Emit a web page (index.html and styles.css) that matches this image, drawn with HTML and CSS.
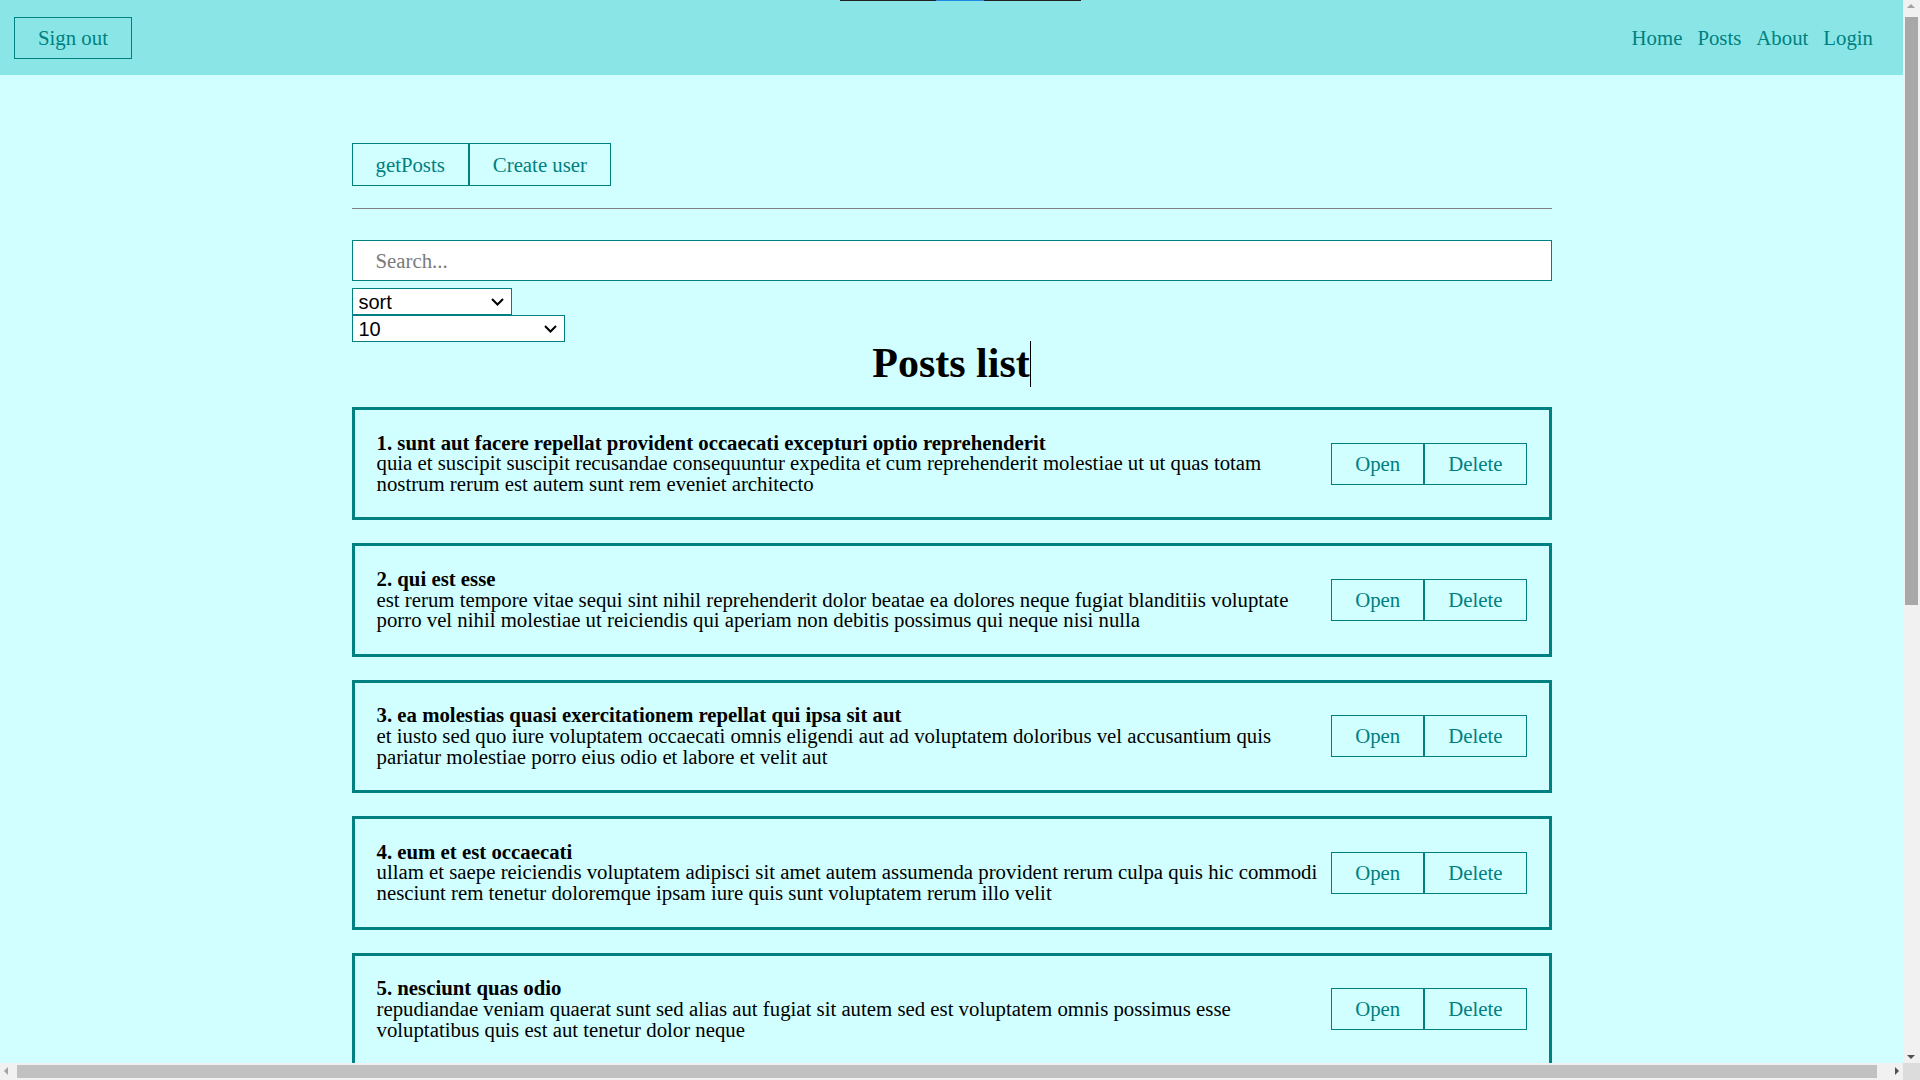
FILE: index.html
```html
<!DOCTYPE html>
<html lang="en">
<head>
<meta charset="utf-8">
<title>Posts</title>
<link rel="stylesheet" href="styles.css">
</head>
<body>
<div class="loader"><span class="loader-seg"></span></div>
<div class="page">
<header class="navbar">
  <button class="btn">Sign out</button>
  <nav class="nav-links">
    <a href="#">Home</a>
    <a href="#">Posts</a>
    <a href="#">About</a>
    <a href="#">Login</a>
  </nav>
</header>
<main class="app">
  <div class="actions">
    <button class="btn">getPosts</button>
    <button class="btn">Create user</button>
  </div>
  <hr class="divider">
  <input class="search" type="text" placeholder="Search...">
  <div class="select-wrap select-sort">
    <select class="select"><option>sort</option></select>
    <svg class="chevron" width="13" height="8" viewBox="0 0 13 8"><path d="M1 1 L6.5 6.5 L12 1" fill="none" stroke="#000" stroke-width="2"/></svg>
  </div>
  <div class="select-wrap select-limit">
    <select class="select"><option>10</option></select>
    <svg class="chevron" width="13" height="8" viewBox="0 0 13 8"><path d="M1 1 L6.5 6.5 L12 1" fill="none" stroke="#000" stroke-width="2"/></svg>
  </div>
  <h1 class="page-title">Posts list<span class="caret"></span></h1>
  <div class="posts">
    <div class="post">
      <div class="post-content">
        <strong>1. sunt aut facere repellat provident occaecati excepturi optio reprehenderit</strong>
        <div>quia et suscipit suscipit recusandae consequuntur expedita et cum reprehenderit molestiae ut ut quas totam nostrum rerum est autem sunt rem eveniet architecto</div>
      </div>
      <div class="post-btns"><button class="btn">Open</button><button class="btn">Delete</button></div>
    </div>
    <div class="post">
      <div class="post-content">
        <strong>2. qui est esse</strong>
        <div>est rerum tempore vitae sequi sint nihil reprehenderit dolor beatae ea dolores neque fugiat blanditiis voluptate porro vel nihil molestiae ut reiciendis qui aperiam non debitis possimus qui neque nisi nulla</div>
      </div>
      <div class="post-btns"><button class="btn">Open</button><button class="btn">Delete</button></div>
    </div>
    <div class="post">
      <div class="post-content">
        <strong>3. ea molestias quasi exercitationem repellat qui ipsa sit aut</strong>
        <div>et iusto sed quo iure voluptatem occaecati omnis eligendi aut ad voluptatem doloribus vel accusantium quis pariatur molestiae porro eius odio et labore et velit aut</div>
      </div>
      <div class="post-btns"><button class="btn">Open</button><button class="btn">Delete</button></div>
    </div>
    <div class="post">
      <div class="post-content">
        <strong>4. eum et est occaecati</strong>
        <div>ullam et saepe reiciendis voluptatem adipisci sit amet autem assumenda provident rerum culpa quis hic commodi nesciunt rem tenetur doloremque ipsam iure quis sunt voluptatem rerum illo velit</div>
      </div>
      <div class="post-btns"><button class="btn">Open</button><button class="btn">Delete</button></div>
    </div>
    <div class="post">
      <div class="post-content">
        <strong>5. nesciunt quas odio</strong>
        <div>repudiandae veniam quaerat sunt sed alias aut fugiat sit autem sed est voluptatem omnis possimus esse voluptatibus quis est aut tenetur dolor neque</div>
      </div>
      <div class="post-btns"><button class="btn">Open</button><button class="btn">Delete</button></div>
    </div>
    <div class="post">
      <div class="post-content">
        <strong>6. dolorem eum magni eos aperiam quia</strong>
        <div>ut aspernatur corporis harum nihil quis provident sequi mollitia nobis aliquid molestiae perspiciatis et ea nemo ab reprehenderit accusantium quas voluptate dolores velit et doloremque molestiae</div>
      </div>
      <div class="post-btns"><button class="btn">Open</button><button class="btn">Delete</button></div>
    </div>
    <div class="post">
      <div class="post-content">
        <strong>7. magnam facilis autem</strong>
        <div>dolore placeat quibusdam ea quo vitae magni quis enim qui quis quo nemo aut saepe quidem repellat excepturi ut quia sunt ut sequi eos ea sed quas</div>
      </div>
      <div class="post-btns"><button class="btn">Open</button><button class="btn">Delete</button></div>
    </div>
    <div class="post">
      <div class="post-content">
        <strong>8. dolorem dolore est ipsam</strong>
        <div>dignissimos aperiam dolorem qui eum facilis quibusdam animi sint suscipit qui sint possimus cum quaerat magni maiores excepturi ipsam ut commodi dolor voluptatum modi aut vitae</div>
      </div>
      <div class="post-btns"><button class="btn">Open</button><button class="btn">Delete</button></div>
    </div>
    <div class="post">
      <div class="post-content">
        <strong>9. nesciunt iure omnis dolorem tempora et accusantium</strong>
        <div>consectetur animi nesciunt iure dolore enim quia ad veniam autem ut quam aut nobis et est aut quod aut provident voluptas autem voluptas</div>
      </div>
      <div class="post-btns"><button class="btn">Open</button><button class="btn">Delete</button></div>
    </div>
    <div class="post">
      <div class="post-content">
        <strong>10. optio molestias id quia eum</strong>
        <div>quo et expedita modi cum officia vel magni doloribus qui repudiandae vero nisi sit quos veniam quod sed accusamus veritatis error</div>
      </div>
      <div class="post-btns"><button class="btn">Open</button><button class="btn">Delete</button></div>
    </div>
  </div>
</main>
</div>
<div class="vscroll">
  <span class="arrow arrow-up"></span>
  <span class="vthumb"></span>
  <span class="arrow arrow-down"></span>
</div>
<div class="hscroll">
  <span class="arrow arrow-left"></span>
  <span class="hthumb"></span>
  <span class="arrow arrow-right"></span>
</div>
<div class="scroll-corner"></div>
</body>
</html>
```
FILE: styles.css
```css
* { box-sizing: border-box; }

html, body {
  margin: 0;
  padding: 0;
}

body {
  background: #d1ffff;
  font-family: "Liberation Serif", "Times New Roman", serif;
  color: #000;
}

.page {
  width: calc(100vw - 17px);
}

.loader {
  position: absolute;
  top: 0;
  left: 840px;
  width: 241px;
  height: 1px;
  background: #222;
  z-index: 5;
}

.loader-seg {
  position: absolute;
  top: 0;
  left: 96px;
  width: 48px;
  height: 1px;
  background: #1e88e5;
}

.navbar {
  height: 75px;
  background: #8ae6e6;
  display: flex;
  align-items: center;
  justify-content: space-between;
  padding: 0 30px 0 14px;
}

.nav-links {
  display: flex;
  gap: 15px;
}

.nav-links a {
  color: #008080;
  text-decoration: none;
  font-size: 20.8px;
}

.btn {
  font-family: "Liberation Serif", "Times New Roman", serif;
  font-size: 20.8px;
  color: #008080;
  background: transparent;
  border: 1px solid #008080;
  padding: 8px 23px;
  line-height: 24px;
  cursor: pointer;
  margin: 0;
}

.app {
  width: 1200px;
  margin: 68px auto 40px;
}

.actions {
  display: flex;
}

.actions .btn {
  height: 43px;
}

.divider {
  margin: 22px 0 31px;
  border: none;
  border-top: 1px solid #808080;
  height: 0;
}

.search {
  display: block;
  width: 100%;
  height: 41px;
  border: 1px solid #008080;
  background: #fff;
  padding: 0 23px;
  font-family: "Liberation Serif", "Times New Roman", serif;
  font-size: 20.8px;
  outline: none;
}

.search::placeholder {
  color: #7a7a7a;
}

.select-wrap {
  position: relative;
}

.select {
  display: block;
  width: 100%;
  height: 27px;
  border: 1px solid #008080;
  background: #fff;
  font-family: "Liberation Sans", Arial, sans-serif;
  font-size: 20px;
  color: #000;
  padding: 0 6px;
  border-radius: 0;
  appearance: none;
  -webkit-appearance: none;
}

.chevron {
  position: absolute;
  right: 8px;
  top: 10px;
  pointer-events: none;
}

.select-sort {
  width: 160px;
  margin-top: 7px;
}

.select-limit {
  width: 213px;
}

.page-title {
  margin: 0 0 22px;
  font-size: 42px;
  font-weight: bold;
  text-align: center;
  line-height: 43px;
}

.caret {
  display: inline-block;
  width: 1px;
  height: 46px;
  margin: -1px 0 -2px;
  background: #000;
  vertical-align: top;
}

.posts {
  display: flex;
  flex-direction: column;
  gap: 23px;
}

.post {
  display: flex;
  align-items: center;
  border: 3px solid #008080;
  padding: 22.5px 22px;
  font-size: 20.8px;
  line-height: 20.8px;
}

.post-content {
  flex: 1;
}

.post-btns {
  display: flex;
  flex-shrink: 0;
}

.post-btns .btn {
  height: 42px;
  line-height: 24px;
}

/* fake browser scrollbars overlaying the viewport edges */
.vscroll {
  position: fixed;
  top: 0;
  right: 0;
  width: 17px;
  height: calc(100vh - 17px);
  background: #f1f1f1;
  z-index: 10;
}

.vthumb {
  position: absolute;
  top: 17px;
  left: 2px;
  width: 13px;
  height: 588px;
  background: #a8a8a8;
}

.hscroll {
  position: fixed;
  left: 0;
  bottom: 0;
  width: calc(100vw - 17px);
  height: 17px;
  background: #f1f1f1;
  z-index: 10;
}

.hthumb {
  position: absolute;
  left: 17px;
  top: 2px;
  height: 13px;
  width: 1860px;
  background: #c1c1c1;
}

.scroll-corner {
  position: fixed;
  right: 0;
  bottom: 0;
  width: 17px;
  height: 17px;
  background: #dcdcdc;
  z-index: 10;
}

.arrow {
  position: absolute;
  width: 0;
  height: 0;
  border: 4px solid transparent;
}

.arrow-up {
  top: 4px;
  left: 4px;
  border-bottom-color: #a3a3a3;
  border-top-width: 0;
}

.arrow-down {
  bottom: 4px;
  left: 4px;
  border-top-color: #505050;
  border-bottom-width: 0;
}

.arrow-left {
  left: 4px;
  top: 4px;
  border-right-color: #a3a3a3;
  border-left-width: 0;
}

.arrow-right {
  right: 4px;
  top: 4px;
  border-left-color: #505050;
  border-right-width: 0;
}
```
